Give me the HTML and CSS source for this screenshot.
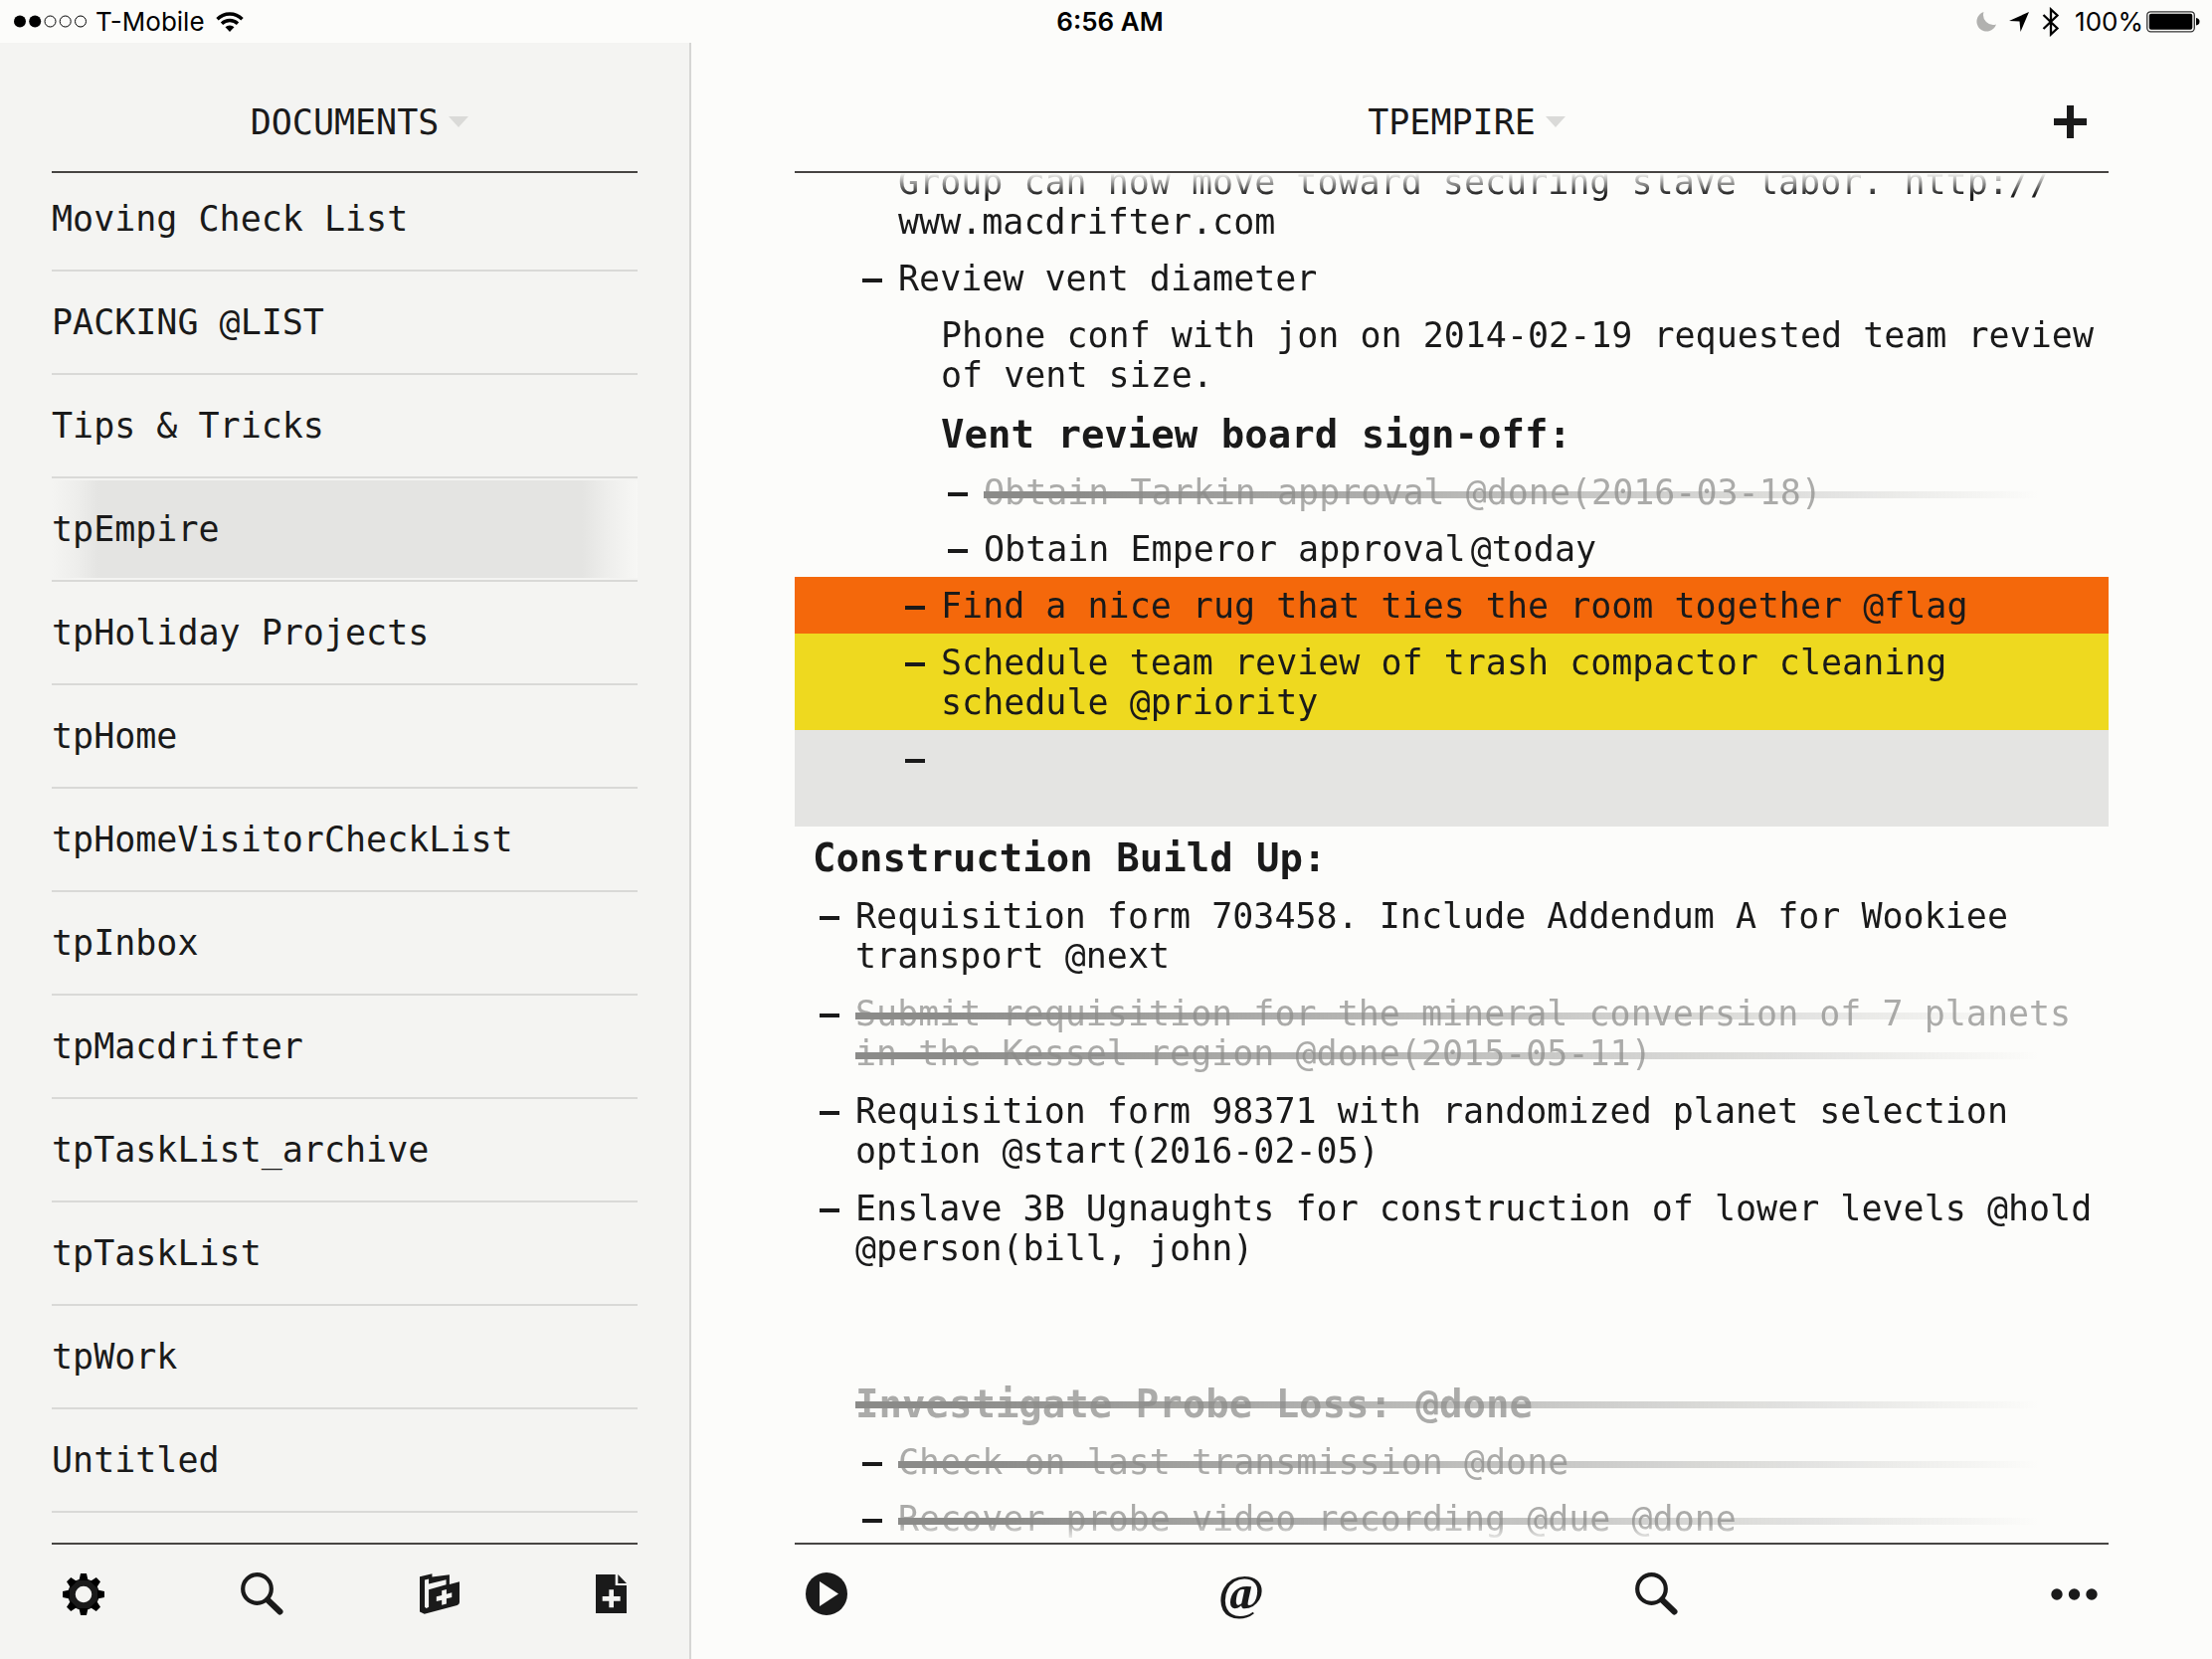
FILE: index.html
```html
<!DOCTYPE html>
<html lang="en">
<head>
<meta charset="utf-8">
<meta name="viewport" content="width=device-width, initial-scale=1">
<title>tpEmpire</title>
<link rel="stylesheet" href="styles.css">
</head>
<body>
<div class="status">
  <div class="status-side">
    <svg class="signal" width="74" height="13" viewBox="0 0 74 13" aria-hidden="true">
      <circle cx="6" cy="6.500" r="6"/><circle cx="21.200" cy="6.500" r="6"/>
      <g fill="none" stroke="#000"><circle cx="36.500" cy="6.500" r="5.500"/><circle cx="51.700" cy="6.500" r="5.500"/><circle cx="67" cy="6.500" r="5.500"/></g>
    </svg>
    <span class="carrier">T-Mobile</span>
    <svg width="28" height="20" viewBox="0 0 28 20" aria-hidden="true">
      <g fill="none" stroke="#000" stroke-width="3.400"><path d="M1.500 7.200A17.500 17.500 0 0 1 26.500 7.200"/><path d="M6 11.800A11.500 11.500 0 0 1 22 11.800"/></g>
      <path d="M14 20L9.500 15.200A6.500 6.500 0 0 1 18.500 15.200Z"/>
    </svg>
  </div>
  <time class="clock">6:56 AM</time>
  <div class="status-side status-right">
    <svg width="20" height="20" viewBox="0 0 20 20" aria-hidden="true"><path fill="#b1b1af" d="M7.500 0A10 10 0 1 0 20 12.500A10 10 0 0 1 7.500 0Z"/></svg>
    <svg width="20" height="20" viewBox="0 0 20 20" aria-hidden="true"><path d="M20 0L11.500 20L10.500 9.500L0 9Z"/></svg>
    <svg width="18" height="30" viewBox="0 0 18 30" aria-hidden="true"><path fill="none" stroke="#000" stroke-width="2.300" d="M1.500 8L15.500 21.500L9 27.500V2.500L15.500 8.500L1.500 22"/></svg>
    <span class="charge">100%</span>
    <svg width="54" height="22" viewBox="0 0 54 22" aria-hidden="true"><rect x=".8" y=".8" width="47.500" height="20" rx="3.500" fill="none" stroke="#333" stroke-width="1.300"/><rect x="2.800" y="2.800" width="43.500" height="16" rx="2"/><path d="M50 7Q53.500 7.500 53.500 10.800T50 14.500Z"/></svg>
  </div>
</div>

<div class="panes">
  <nav class="sidebar" aria-label="Documents">
    <header class="bar">
      <button class="title" type="button">DOCUMENTS</button>
      <svg class="arrow" width="20" height="11" viewBox="0 0 20 11" aria-hidden="true"><path d="M0 0H20L10 11Z"/></svg>
    </header>
    <ul class="docs">
      <li><a href="#moving">Moving Check List</a></li>
      <li><a href="#packing">PACKING @LIST</a></li>
      <li><a href="#tips">Tips &amp; Tricks</a></li>
      <li class="selected"><a href="#empire" aria-current="page">tpEmpire</a></li>
      <li><a href="#holiday">tpHoliday Projects</a></li>
      <li><a href="#home">tpHome</a></li>
      <li><a href="#visitor">tpHomeVisitorCheckList</a></li>
      <li><a href="#inbox">tpInbox</a></li>
      <li><a href="#macdrifter">tpMacdrifter</a></li>
      <li><a href="#archive">tpTaskList_archive</a></li>
      <li><a href="#tasklist">tpTaskList</a></li>
      <li><a href="#work">tpWork</a></li>
      <li><a href="#untitled">Untitled</a></li>
    </ul>
    <footer class="tools">
      <button type="button" aria-label="Settings">
        <svg width="42" height="42" viewBox="-21 -21 42 42"><defs><path id="tooth" d="M-4.500 -14L-3 -21H3L4.500 -14Z"/></defs>
          <circle r="12" fill="none" stroke="#1a1a1a" stroke-width="7.500"/>
          <use href="#tooth"/><use href="#tooth" transform="rotate(45)"/><use href="#tooth" transform="rotate(90)"/><use href="#tooth" transform="rotate(135)"/><use href="#tooth" transform="rotate(180)"/><use href="#tooth" transform="rotate(225)"/><use href="#tooth" transform="rotate(270)"/><use href="#tooth" transform="rotate(315)"/></svg>
      </button>
      <button type="button" aria-label="Search">
        <svg width="43" height="43" viewBox="0 0 43 43" fill="none" stroke="#1a1a1a"><circle cx="16.500" cy="16.500" r="14.300" stroke-width="4.200"/><path d="M27 27.500L39.500 39.500" stroke-width="6" stroke-linecap="round"/></svg>
      </button>
      <button type="button" aria-label="New folder">
        <svg width="40" height="41" viewBox="0 0 119 121"><path fill="#1a1a1a" d="M0 9L37 0V10L89 3V32L119 24V86Q119 92 112 95L14 121L0 114Z"/><path fill="#f4f4f2" d="M15 19L27 16V31L79 18V33L27 48V100L20 104L15 100ZM66 51L80 47V61L96 57V71L80 75V90L66 94V79L50 83V69L66 65Z"/></svg>
      </button>
      <button type="button" aria-label="New document">
        <svg width="31" height="39" viewBox="0 0 93 117"><path fill="#1a1a1a" fill-rule="evenodd" d="M0 0H59V33H93V117H0ZM40 46V66H20V80H40V100H54V80H74V66H54V46Z"/><path fill="#1a1a1a" d="M67 0L93 27H67Z"/></svg>
      </button>
    </footer>
  </nav>

  <main class="editor">
    <header class="bar">
      <button class="title" type="button">TPEMPIRE</button>
      <svg class="arrow" width="20" height="11" viewBox="0 0 20 11" aria-hidden="true"><path d="M0 0H20L10 11Z"/></svg>
      <button class="add" type="button" aria-label="Add item"><svg width="33" height="33" viewBox="0 0 33 33"><path d="M13 0H20V13H33V20H20V33H13V20H0V13H13Z"/></svg></button>
    </header>
    <div class="viewport">
      <div class="outline">
        <div class="row note level2"><p>Group can now move toward securing slave labor. http://<wbr>www.macdrifter.com</p></div>
        <div class="row level2"><i class="dash"></i><p>Review vent diameter</p></div>
        <div class="row note level3"><p>Phone conf with jon on 2014-02-19 requested team review of vent size.</p></div>
        <div class="row note heading level3"><h2>Vent review board sign-off:</h2></div>
        <div class="row level4 done"><i class="dash"></i><p>Obtain Tarkin approval @done(2016-03-18)</p></div>
        <div class="row level4"><i class="dash"></i><p>Obtain Emperor approval<span class="today">@today</span></p></div>
        <div class="row level3 flag"><i class="dash"></i><p>Find a nice rug that ties the room together @flag</p></div>
        <div class="row level3 priority"><i class="dash"></i><p>Schedule team review of trash compactor cleaning schedule @priority</p></div>
        <div class="row level3 editing"><i class="dash"></i><textarea aria-label="New task" rows="2"></textarea></div>
        <div class="row note heading level0"><h2>Construction Build Up:</h2></div>
        <div class="group">
          <div class="row level1"><i class="dash"></i><p>Requisition form 703458. Include Addendum A for Wookiee transport @next</p></div>
          <div class="row level1 done"><i class="dash"></i><p>Submit requisition for the mineral conversion of 7 planets in the Kessel region @done(2015-05-11)</p></div>
          <div class="row level1"><i class="dash"></i><p>Requisition form 98371 with randomized planet selection option @start(2016-02-05)</p></div>
          <div class="row level1"><i class="dash"></i><p>Enslave 3B Ugnaughts for construction of lower levels @hold @person(bill, john)</p></div>
        </div>
        <div class="row note heading level1 done"><h2>Investigate Probe Loss: @done</h2></div>
        <div class="row level2 done"><i class="dash"></i><p>Check on last transmission @done</p></div>
        <div class="row level2 done"><i class="dash"></i><p>Recover probe video recording @due @done</p></div>
      </div>
    </div>
    <footer class="tools">
      <button type="button" aria-label="Go to"><svg width="42" height="43" viewBox="0 0 42 43"><ellipse cx="21" cy="21.500" rx="21" ry="21.500" fill="#1a1a1a"/><path fill="#fcfcfa" d="M14 9L33 21.500L14 34Z"/></svg></button>
      <button class="at" type="button" aria-label="Tags">@</button>
      <button type="button" aria-label="Search"><svg width="43" height="43" viewBox="0 0 43 43" fill="none" stroke="#1a1a1a"><circle cx="16.500" cy="16.500" r="14.300" stroke-width="4.200"/><path d="M27 27.500L39.500 39.500" stroke-width="6" stroke-linecap="round"/></svg></button>
      <button type="button" aria-label="More"><svg width="47" height="12" viewBox="0 0 47 12" fill="#1a1a1a"><circle cx="6" cy="6" r="5.700"/><circle cx="23.500" cy="6" r="5.700"/><circle cx="41" cy="6" r="5.700"/></svg></button>
    </footer>
  </main>
</div>
</body>
</html>
```
FILE: styles.css
```css
* { box-sizing: border-box; margin: 0; padding: 0; }

body {
  display: flex;
  flex-direction: column;
  height: 100vh;
  background: #fcfcfa;
  color: #1a1a1a;
  font: 35px/40px "DejaVu Sans Mono", monospace;
}

svg { display: block; flex: none; }
a { color: inherit; text-decoration: none; }
button { border: 0; background: none; color: inherit; font: inherit; cursor: pointer; }

/* Status bar */
.status {
  display: grid;
  grid-template-columns: 1fr auto 1fr;
  align-items: center;
  flex: none;
  height: 43px;
  padding: 0 12px 0 14px;
  color: #000;
  font: 26px/32px Inter, sans-serif;
}
.status-side { display: flex; align-items: center; }
.carrier { margin: 0 11px 0 8px; }
.clock { padding-left: 6px; font-weight: 600; }
.status-right { justify-content: flex-end; gap: 13px; }
.charge { margin: 0 -10px 0 2px; }

/* Panes */
.panes { display: flex; flex: 1; min-height: 0; }
.sidebar, .editor { display: flex; flex-direction: column; min-width: 0; }
.sidebar {
  flex: 0 0 695px;
  padding: 0 52px;
  border-right: 2px solid #d6d6d4;
  background: #f4f4f2;
}
.editor { flex: 1; padding: 0 104px; }

.bar {
  display: grid;
  grid-template-columns: 1fr auto 1fr;
  align-items: center;
  flex: none;
  height: 131px;
  padding-top: 30px;
  border-bottom: 2px solid #474543;
}
.title { grid-column: 2; }
.arrow { grid-area: 1 / 3; margin-left: 10px; fill: #dadad8; }
.add { grid-area: 1 / 3; justify-self: end; margin-right: 22px; }
.add svg { fill: #1a1a1a; }

.docs { flex: 1; min-height: 0; overflow: hidden; list-style: none; }
.docs li { height: 104px; border-bottom: 2px solid #d9d9d7; }
.docs li:first-child { height: 99px; }
.docs a { display: flex; align-items: center; height: 100%; }
.docs li:first-child a { padding-bottom: 6px; }
.docs .selected {
  background: linear-gradient(to right, #f4f4f2, #eeeeec 24px, #e4e4e2 48px, #e4e4e2 calc(100% - 56px), #eeeeec calc(100% - 30px), #f7f7f5) 0 50% / 100% calc(100% - 4px) no-repeat;
}

.tools {
  display: flex;
  justify-content: space-between;
  align-items: center;
  flex: none;
  height: 117px;
  padding: 0 11px 16px;
  border-top: 2px solid #474543;
}
.at {
  display: flex;
  justify-content: center;
  width: 42px;
  padding-bottom: 4px;
  font: 700 50px/42px "Liberation Serif", serif;
}

/* Outline */
.viewport {
  flex: 1;
  min-height: 0;
  overflow: hidden;
  -webkit-mask-image: linear-gradient(transparent, #000 22px, #000 calc(100% - 18px), transparent);
  mask-image: linear-gradient(transparent, #000 22px, #000 calc(100% - 18px), transparent);
}
.outline { margin-top: -20px; }
.row {
  --indent: 0px;
  display: flex;
  align-items: flex-start;
  padding: 9px 0 8px calc(var(--indent) - 18px);
}
.note { padding-left: calc(var(--indent) + 18px); }
.heading { padding-top: 10px; padding-bottom: 7px; }
.level1 { --indent: 43px; }
.level2 { --indent: 86px; }
.level3 { --indent: 129px; }
.level4 { --indent: 172px; }
.row p, .row h2 { flex: 1; position: relative; }
.row h2 { font-size: 39px; line-height: 44px; }
.dash { flex: none; width: 20px; height: 4px; margin: 20px 16px 0 0; background: #1a1a1a; }
.today { margin-left: 5px; }
.flag { background: #f4680b; }
.priority { background: #eed91f; }
.editing { background: #e4e4e2; }
.editing textarea {
  flex: 1;
  height: 80px;
  border: 0;
  outline: 0;
  background: none;
  color: inherit;
  font: inherit;
  resize: none;
}
.group { display: flex; flex-direction: column; gap: 1px; margin-bottom: 97px; }

/* Completed items: one fading stroke across each text line */
.done p, .done h2 { color: #ababa9; }
.done p::after, .done h2::after {
  content: "";
  position: absolute;
  inset: 0 70px 0 0;
  background: linear-gradient(to right, #8b8b89 8%, rgba(139, 139, 137, 0));
  -webkit-mask-image: linear-gradient(transparent 19px, #000 19px, #000 26px, transparent 26px);
  mask-image: linear-gradient(transparent 19px, #000 19px, #000 26px, transparent 26px);
  -webkit-mask-size: 100% 40px;
  mask-size: 100% 40px;
}
.done h2::after { -webkit-mask-size: 100% 44px; mask-size: 100% 44px; }
```
